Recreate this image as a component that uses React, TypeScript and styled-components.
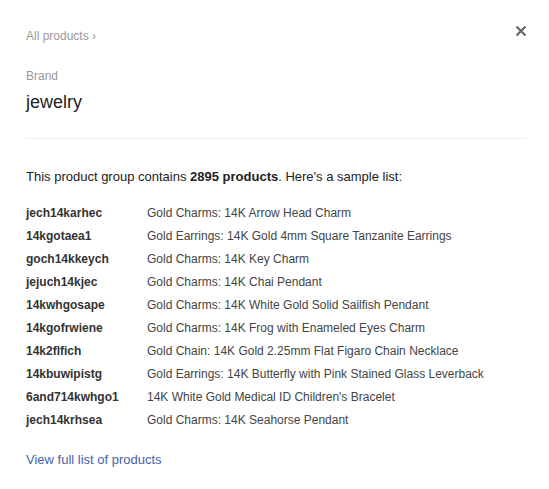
import React from "react";
import styled, { createGlobalStyle } from "styled-components";

const Global = createGlobalStyle`
  html, body { margin: 0; padding: 0; background: #fff; }
  body { font-family: "Liberation Sans", Arial, sans-serif; }
`;

const Panel = styled.div`
  width: 549px;
  box-sizing: border-box;
  padding: 27px 22px 0 26px;
  color: #222;
`;

const TopBar = styled.div`
  display: flex;
  justify-content: space-between;
  align-items: flex-start;
  height: 18px;
`;

const Crumb = styled.a`
  font-size: 12px;
  line-height: 18px;
  color: #999;
  text-decoration: none;
`;

const Close = styled.button`
  border: 0;
  background: none;
  padding: 0;
  margin-top: -2px;
  width: 12px;
  height: 12px;
  cursor: pointer;
  display: flex;
`;

const Header = styled.div`
  margin-top: 23px;
  margin-right: 1px;
  padding-bottom: 24px;
  border-bottom: 1px solid #ebebeb;
`;

const Label = styled.div`
  font-size: 12px;
  line-height: 16px;
  color: #999;
`;

const Title = styled.div`
  font-size: 18px;
  line-height: 24px;
  color: #222;
  margin-top: 6px;
`;

const Intro = styled.p`
  margin: 29px 0 15px;
  font-size: 13px;
  line-height: 18px;
  color: #222;
  b { font-weight: bold; }
`;

const Rows = styled.div`
  display: grid;
  grid-template-columns: 121px 1fr;
  grid-auto-rows: 23px;
  font-size: 12px;
  align-items: center;
`;

const Sku = styled.div`
  font-weight: bold;
  color: #333;
`;

const Desc = styled.div`
  color: #444;
`;

const FullLink = styled.a`
  display: inline-block;
  margin-top: 20px;
  font-size: 13px;
  line-height: 18px;
  color: #4563ad;
  text-decoration: none;
`;

const products: [string, string][] = [
  ["jech14karhec", "Gold Charms: 14K Arrow Head Charm"],
  ["14kgotaea1", "Gold Earrings: 14K Gold 4mm Square Tanzanite Earrings"],
  ["goch14kkeych", "Gold Charms: 14K Key Charm"],
  ["jejuch14kjec", "Gold Charms: 14K Chai Pendant"],
  ["14kwhgosape", "Gold Charms: 14K White Gold Solid Sailfish Pendant"],
  ["14kgofrwiene", "Gold Charms: 14K Frog with Enameled Eyes Charm"],
  ["14k2flfich", "Gold Chain: 14K Gold 2.25mm Flat Figaro Chain Necklace"],
  ["14kbuwipistg", "Gold Earrings: 14K Butterfly with Pink Stained Glass Leverback"],
  ["6and714kwhgo1", "14K White Gold Medical ID Children's Bracelet"],
  ["jech14krhsea", "Gold Charms: 14K Seahorse Pendant"],
];

export default function App() {
  return (
    <>
      <Global />
      <Panel>
        <TopBar>
          <Crumb href="#">All products ›</Crumb>
          <Close aria-label="Close">
            <svg width="12" height="12" viewBox="0 0 12 12">
              <path d="M1.5 1.5 L10.5 10.5 M10.5 1.5 L1.5 10.5" stroke="#666" strokeWidth="2.2" />
            </svg>
          </Close>
        </TopBar>
        <Header>
          <Label>Brand</Label>
          <Title>jewelry</Title>
        </Header>
        <Intro>
          This product group contains <b>2895 products</b>. Here's a sample list:
        </Intro>
        <Rows>
          {products.map(([sku, name]) => (
            <React.Fragment key={sku}>
              <Sku>{sku}</Sku>
              <Desc>{name}</Desc>
            </React.Fragment>
          ))}
        </Rows>
        <FullLink href="#">View full list of products</FullLink>
      </Panel>
    </>
  );
}
